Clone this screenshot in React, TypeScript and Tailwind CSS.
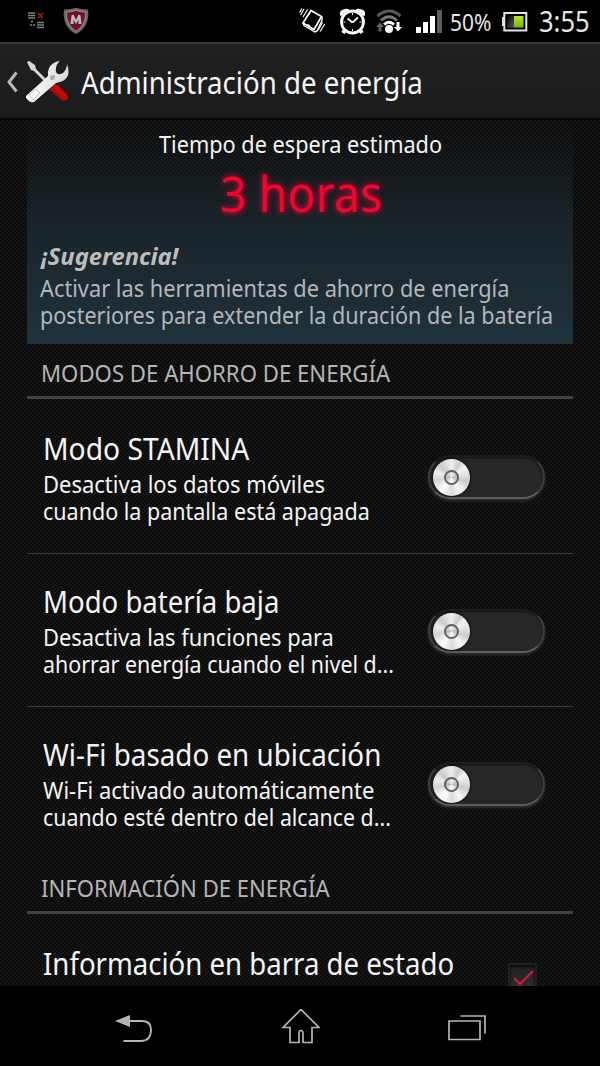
import { useLayoutEffect, useRef, useState } from "react";
import type { ReactNode } from "react";

const MODES = [
    {
        title: { text: "Modo STAMINA", width: 206 },
        lines: [
            { text: "Desactiva los datos móviles", width: 282 },
            { text: "cuando la pantalla está apagada", width: 327 },
        ],
    },
    {
        title: { text: "Modo batería baja", width: 236 },
        lines: [
            { text: "Desactiva las funciones para", width: 291 },
            { text: "ahorrar energía cuando el nivel d...", width: 351 },
        ],
    },
    {
        title: { text: "Wi-Fi basado en ubicación", width: 338 },
        lines: [
            { text: "Wi-Fi activado automáticamente", width: 331 },
            { text: "cuando esté dentro del alcance d...", width: 348 },
        ],
    },
];

// Single line label, condensed or expanded to the requested width
function Label({ width, className = "", children }: { width: number; className?: string; children: ReactNode }) {
    const ref = useRef<HTMLSpanElement>(null);
    const [scale, setScale] = useState(1);

    useLayoutEffect(() => {
        if (ref.current) setScale(width / ref.current.offsetWidth);
    }, [width]);

    return (
        <div className={`whitespace-nowrap ${className}`} style={{ width }}>
            <span ref={ref} className="inline-block origin-left" style={{ transform: `scaleX(${scale})` }}>
                {children}
            </span>
        </div>
    );
}

function NotificationIcon() {
    return (
        <svg width="18" height="18" viewBox="0 0 18 18" className="ml-7">
            <path d="M0 1h7M0 3.500h7M0 6h7M9 10.500h7M9 13h7M9 15.500h7" stroke="#808080" strokeWidth="1.600" />
            <path d="M10 1l5 5M15 1l-5 5" stroke="#b3150f" strokeWidth="1.500" />
            <path d="M3 9.500h2M2 13h2M5 13h2" stroke="#888" strokeWidth="1.500" />
        </svg>
    );
}

function ShieldIcon() {
    return (
        <svg width="26" height="28" viewBox="0 0 26 28" className="ml-[17px]">
            <path d="M13 .8Q7 3 1 2.500Q0 11 3 17.500Q6 23.500 13 27Q20 23.500 23 17.500Q26 11 25 2.500Q19 3 13 .8Z" fill="#6b6b6b" />
            <path d="M13 3.400Q8 5.200 3.500 5Q3.200 11 5.500 16Q8 21.500 13 24.200Q18 21.500 20.500 16Q22.800 11 22.500 5Q18 5.200 13 3.400Z" fill="#6d1427" stroke="#929292" strokeWidth="1" />
            <path d="M7.500 17L8.500 8.500l2-1L13 13l2.500-5.500 2 1L18.500 17h-3v-4.500L13 17l-2.500-4.500V17Z" fill="#bdbdbd" />
        </svg>
    );
}

function VibrateIcon() {
    return (
        <svg width="27" height="26" viewBox="0 0 27 26" fill="none" stroke="#fff" strokeWidth="1.4">
            <path d="M12 2.500L22.500 8.500L15 21.500L4 15Z" strokeWidth="1.700" />
            <path d="M4 15L5 17.500l11 6.500 2-1L23 12.500V8.500M8.500 16.500l2.500 1.500" />
            <path d="M8.500 1.500L4 9M5 1L1.500 7M3 .5L.5 4.500M25.700 16l-4.500 7.500M23.500 14.500l-4.300 7.500" strokeWidth="1.200" />
        </svg>
    );
}

function AlarmIcon() {
    return (
        <svg width="27" height="28" viewBox="0 0 27 28" fill="none" stroke="#fff">
            <path d="M3 7.500Q1.500 3.500 5.500 3Q8 2 9.500 3.500M24 7.500Q25.500 3.500 21.500 3Q19 2 17.500 3.500" strokeWidth="3.500" />
            <circle cx="13.500" cy="14" r="11" strokeWidth="2.800" />
            <path d="M13.500 14.500L8.500 10.500M13.500 14.500L19 9.500" strokeWidth="1.700" />
            <path d="M13.500 5v2M13.500 21v2M4.500 14h2M20.500 14h2" strokeWidth="1" />
            <path d="M6 22l-2 3M21 22l2 3" strokeWidth="4" />
        </svg>
    );
}

function WifiIcon() {
    return (
        <svg width="26" height="25" viewBox="0 0 26 25" fill="none">
            <path d="M1.500 7Q13-3 24.500 7" stroke="#5b5b5b" strokeWidth="3" />
            <path d="M5 11.500Q13 4 21 11.500" stroke="#777" strokeWidth="3" />
            <path d="M8 15.500Q13 11 18 15.500" stroke="#fff" strokeWidth="3" />
            <circle cx="13" cy="20" r="4" fill="#fff" />
            <path d="M4 13.500L0 18h2.500v4.500h3V18H8Z" fill="#626262" />
            <path d="M22 22.500l4-4.500h-2.500v-5h-3v5H18Z" fill="#fff" />
        </svg>
    );
}

function SignalIcon() {
    return (
        <svg width="26" height="24" viewBox="0 0 26 24">
            <path d="M0 17h5v6H0zM7 12h5v11H7zM14 6h5v17h-5z" fill="#fff" />
            <path d="M21 0h5v23h-5z" fill="#5c5c5c" />
        </svg>
    );
}

function BatteryIcon() {
    return (
        <svg width="26" height="20" viewBox="0 0 26 20">
            <defs>
                <linearGradient id="charge" x1="0" y1="0" x2="0" y2="1">
                    <stop offset="0" stopColor="#b4e62c" />
                    <stop offset="1" stopColor="#76b900" />
                </linearGradient>
                <linearGradient id="empty" x1="0" y1="0" x2="1" y2="1">
                    <stop offset="0" stopColor="#000" />
                    <stop offset="1" stopColor="#555" />
                </linearGradient>
            </defs>
            <path d="M2 5H0v9h2" fill="#ddd" />
            <rect x="2.300" y="1" width="22" height="17.500" fill="#000" stroke="#e4e4e4" strokeWidth="2" />
            <rect x="5" y="4" width="7" height="11.500" fill="url(#empty)" />
            <rect x="12" y="4" width="9.500" height="11.500" fill="url(#charge)" />
        </svg>
    );
}

function StatusBar() {
    return (
        <div className="flex h-[42px] shrink-0 items-center bg-black">
            <NotificationIcon />
            <ShieldIcon />
            <div className="ml-auto flex items-center pr-2.5">
                <VibrateIcon />
                <div className="ml-[13px] pt-0.5"><AlarmIcon /></div>
                <div className="ml-2.5 pt-px"><WifiIcon /></div>
                <div className="ml-3.5 pt-0.5"><SignalIcon /></div>
                <Label width={41} className="ml-2 pt-px text-[23px] leading-[42px] text-[#e6e6e6]">50%</Label>
                <div className="ml-[11px] pt-0.5"><BatteryIcon /></div>
                <Label width={51} className="ml-[11px] text-[29px] leading-[42px] text-[#e6e6e6]">3:55</Label>
            </div>
        </div>
    );
}

function ToolsIcon() {
    return (
        <svg width="44" height="44" viewBox="0 0 44 44" className="mt-0.5 ml-2">
            <defs>
                <linearGradient id="steel" x1="0" y1="0" x2="1" y2="0">
                    <stop offset="0" stopColor="#fff" />
                    <stop offset="1" stopColor="#d8d8d8" />
                </linearGradient>
                <linearGradient id="handle" x1="0" y1="1" x2="1" y2="0">
                    <stop offset="0" stopColor="#6d0000" />
                    <stop offset=".6" stopColor="#cf0808" />
                    <stop offset="1" stopColor="#7d0000" />
                </linearGradient>
            </defs>
            <path d="M1 2L3 1l6 4 1 4 10 10-2 2L8 11 5 10Z" fill="#d8d8d8" />
            <path d="M23 30l6-6 3 1 9 10q2 3-1 5t-5 0l-9-8Z" fill="url(#handle)" />
            <path d="M0 36L22 16Q21 3 34 1Q29 5 30 12Q32 16 37 13Q41 9 41 4Q47 20 30 23L8 42Q5 43 3 41L0 38Z" fill="url(#steel)" />
            <path d="M3 35l7-6 4 4-7 7Z" fill="none" stroke="#c2c2c2" />
            <path d="M24.500 15.500h4v4h-4z" fill="#8d8d8d" />
            <path d="M25 16l3 3" stroke="#ddd" />
        </svg>
    );
}

function Header() {
    return (
        <div className="flex h-[78px] shrink-0 items-center border-t-2 border-b-2 border-t-[#383838] border-b-[#090909] bg-linear-to-b from-[#202020] to-[#1b1b1b]">
            <svg width="11" height="22" viewBox="0 0 11 22" className="mt-px ml-[7px]">
                <path d="M9.500 1.500L2 11l7.500 9.500" fill="none" stroke="#b9b9b9" strokeWidth="3" />
            </svg>
            <ToolsIcon />
            <Label width={342} className="ml-[11px] pt-[3px] text-[30px] leading-[42px]">Administración de energía</Label>
        </div>
    );
}

function StandbyPanel() {
    return (
        <div className="h-[224px] bg-linear-to-b from-[#14202600] via-[#1e2e38b0] to-[#213742e0] pt-2">
            <Label width={283} className="ml-[132px] text-[23px] leading-8">Tiempo de espera estimado</Label>
            <Label width={162} className="ml-[193px] text-[50px] leading-[66px] text-[#f5032f] [text-shadow:0_0_7px_#f5032f]">
                3 horas
            </Label>
            <Label width={137} className="mt-3.5 ml-3.5 text-[23px] leading-8 font-bold text-[#bdbdbd] italic">
                ¡Sugerencia!
            </Label>
            <div className="mt-[3px] ml-[13px] text-[23px] leading-[27px] text-[#b3b7b9]">
                <Label width={469}>Activar las herramientas de ahorro de energía</Label>
                <Label width={513}>posteriores para extender la duración de la batería</Label>
            </div>
        </div>
    );
}

function SectionTitle({ width, children }: { width: number; children: ReactNode }) {
    return (
        <div className="h-[55px] shrink-0 border-b-[3px] border-[#424242] pt-3 pl-3.5">
            <Label width={width} className="text-[23px] leading-[34px] text-[#b5b5b5]">{children}</Label>
        </div>
    );
}

function Toggle() {
    return (
        <div className="mt-0.5 mr-7 h-[44px] w-[117px] rounded-full border-2 border-t-[#1e1e1e] border-r-[#3d3d3d] border-b-[#5e5e5e] border-l-[#3d3d3d] bg-[#272727] p-[2px] pl-[3px] shadow-[0_2px_3px_#303030,inset_0_1px_2px_#111]">
            <div className="flex size-[37px] items-center justify-center rounded-full bg-[conic-gradient(#eee,#ccc_30deg,#f4f4f4_50deg,#ddd_85deg,#ccc_105deg,#f7f7f7_145deg,#dcdcdc_180deg,#fff_215deg,#d4d4d4_260deg,#eee_290deg,#ccc_315deg,#eee)] shadow-[0_0_3px_#000]">
                <div className="size-[15px] rounded-full border-2 border-[#606060] bg-[conic-gradient(#eee,#bbb,#fff,#bbb,#eee)]" />
            </div>
        </div>
    );
}

function NavigationBar() {
    return (
        <div className="flex h-20 shrink-0 items-center justify-between bg-black pt-0.5 pr-[113px] pl-[114px]">
            <svg width="39" height="30" viewBox="0 0 39 30" fill="none" stroke="#b5b5b5" strokeWidth="1.800">
                <path d="M15 9h13Q37 9 37 17.500Q37 29 27 29H9.500" />
                <path d="M1 9L16 3v12Z" fill="#b5b5b5" stroke="none" />
            </svg>
            <svg width="38" height="36" viewBox="0 0 38 36" fill="none" stroke="#b5b5b5" strokeWidth="1.700">
                <path d="M19 .5L1 18.500h7v15h9V24.500q0-3 2-3t2 3v9h9V18.500h7Z" />
            </svg>
            <svg width="39" height="28" viewBox="0 0 39 28" fill="none" stroke="#b5b5b5" strokeWidth="1.700">
                <path d="M1 7.500h31v18.500H1ZM12.500 2.500H37v17.500" transform="translate(0 .5)" />
            </svg>
        </div>
    );
}

export default function App() {
    return (
        <div className="flex h-[1066px] w-[600px] flex-col overflow-hidden bg-black font-['Noto_Sans',sans-serif] text-[#f4f4f4]">
            <StatusBar />
            <Header />

            <div className="min-h-0 flex-1 overflow-hidden bg-[#0b0b0b] bg-[repeating-conic-gradient(#151515_0_25%,#0b0b0b_0_50%)] bg-size-[4px_4px] px-[27px]">
                <StandbyPanel />
                <SectionTitle width={349}>MODOS DE AHORRO DE ENERGÍA</SectionTitle>

                <div className="pt-px">
                    {MODES.map((mode) => (
                        <div
                            key={mode.title.text}
                            className="flex h-[153.500px] items-center justify-between border-b border-[#3c3c3c] pl-4 last:h-[152px] last:border-transparent"
                        >
                            <div className="pt-1">
                                <Label width={mode.title.width} className="text-[30px] leading-[34px]">{mode.title.text}</Label>
                                <div className="mt-[5px] text-[23px] leading-[27px]">
                                    {mode.lines.map((line) => (
                                        <Label key={line.text} width={line.width}>{line.text}</Label>
                                    ))}
                                </div>
                            </div>
                            <Toggle />
                        </div>
                    ))}
                </div>

                <SectionTitle width={289}>INFORMACIÓN DE ENERGÍA</SectionTitle>
                <div className="flex items-start justify-between pt-[33px] pr-9 pl-4">
                    <Label width={411} className="text-[30px] leading-[34px]">Información en barra de estado</Label>
                    <div className="mt-4 size-[29px] border-2 border-[#222] bg-linear-to-b from-[#202020] to-[#303030] shadow-[inset_0_1px_3px_#000]">
                        <svg width="25" height="25" viewBox="0 0 25 25">
                            <path d="M4 13l6 6L23 6" fill="none" stroke="#df1737" strokeWidth="2" />
                        </svg>
                    </div>
                </div>
            </div>

            <NavigationBar />
        </div>
    );
}
